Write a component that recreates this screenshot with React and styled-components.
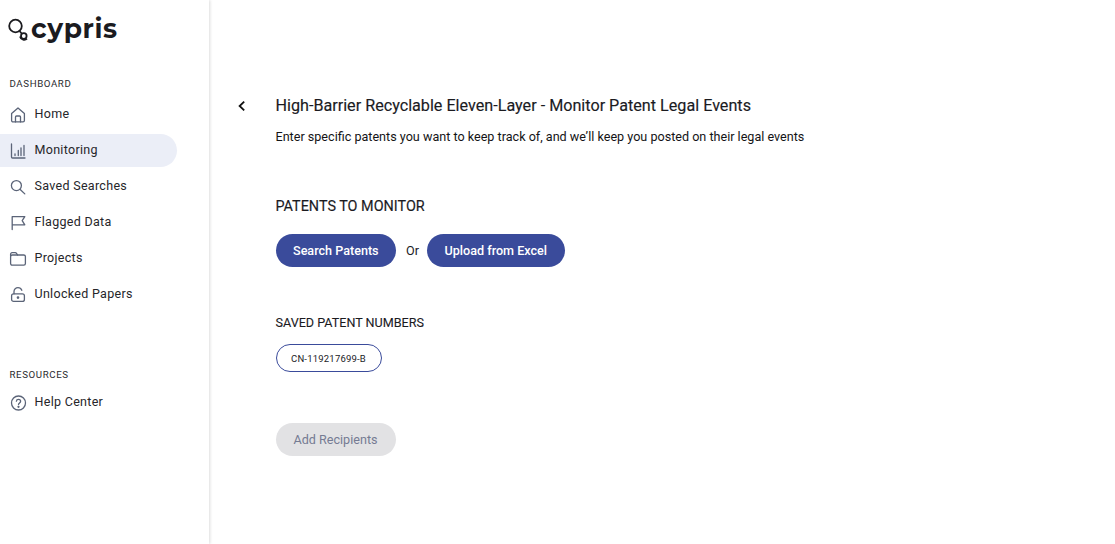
import React from 'react';
import styled, { createGlobalStyle } from 'styled-components';

const GlobalStyle = createGlobalStyle`
html, body {
  margin: 0;
  padding: 0;
  height: 100%;
  background: #fff;
  font-family: Roboto, "Liberation Sans", sans-serif;
  -webkit-font-smoothing: antialiased;
}
#root {
  height: 100%;
}
`

const navIcons = {
  home: (
    <>
      <path d="M2.6 7.6 9 1.9l6.4 5.7v6.9c0 .9-.6 1.4-1.4 1.4H4c-.8 0-1.4-.5-1.4-1.4V7.6z" />
      <path d="M6.5 15.9V11c0-.6.4-1 1-1h3c.6 0 1 .4 1 1v4.9" />
    </>
  ),
  chart: (
    <>
      <path d="M2.5 2v13c0 .6.4 1 1 1H16" />
      <path d="M6 13.5v-1.7M9.3 13.5V8.5M12 13.5V5.8M15 13.5v-10" />
    </>
  ),
  search: (
    <>
      <circle cx="7.4" cy="7.6" r="5" />
      <path d="m11.2 11.5 4.6 4.4" />
    </>
  ),
  flag: (
    <path d="M3.2 15.5V2.6h12.6l-2.6 4 2.6 4.2H3.2" />
  ),
  folder: (
    <>
      <path d="M1.6 6V4.2c0-.9.6-1.5 1.5-1.5h3.2c.5 0 .9.2 1.2.6L8.6 5" />
      <rect x="1.6" y="5" width="14.8" height="10.2" rx="1.6" />
    </>
  ),
  lock: (
    <>
      <rect x="2.6" y="7.8" width="12.8" height="7.6" rx="2" />
      <path d="M5 7.8V5.5c0-2.2 1.8-3.8 4-3.8 1.8 0 3.2 1 3.8 2.6" />
      <circle cx="9" cy="11.6" r=".7" fill="#5b6478" />
    </>
  ),
  help: (
    <>
      <circle cx="9.5" cy="9" r="7" />
      <path d="M7.4 7.2c.1-1.2 1-1.9 2.1-1.9 1.2 0 2.1.8 2.1 1.9 0 1.7-2.1 1.7-2.1 3.4" />
      <circle cx="9.5" cy="12.8" r=".5" fill="#5b6478" />
    </>
  ),
}

const NavItem = ({ icon, label, active }) => (
  <NavRow $active={active}>
    <NavIcon viewBox="0 0 18 18">{navIcons[icon]}</NavIcon>
    <NavLabel>{label}</NavLabel>
  </NavRow>
)

function App() {
  return (
    <Page>
      <GlobalStyle />
      <Sidebar>
        <Logo>
          <svg width="24" height="26" viewBox="0 0 24 26" fill="none" stroke="#1b1b1f" strokeWidth="1.8">
            <circle cx="7.5" cy="10" r="6.3" />
            <path d="m11.5 15 2.6 3" />
            <circle cx="15.8" cy="20" r="2.8" />
            <path d="M12 20.5c1 3.6 5 4.2 7 2.2" />
          </svg>
          <LogoText>cypris</LogoText>
        </Logo>
        <SectionTitle>DASHBOARD</SectionTitle>
        <NavItem icon="home" label="Home" />
        <NavItem icon="chart" label="Monitoring" active />
        <NavItem icon="search" label="Saved Searches" />
        <NavItem icon="flag" label="Flagged Data" />
        <NavItem icon="folder" label="Projects" />
        <NavItem icon="lock" label="Unlocked Papers" />
        <ResourcesTitle>RESOURCES</ResourcesTitle>
        <NavItem icon="help" label="Help Center" />
      </Sidebar>
      <Main>
        <Header>
          <BackIcon viewBox="0 0 12 12" fill="none" stroke="#111" strokeWidth="1.8">
            <path d="M8.2 1.6 3.6 6l4.6 4.4" />
          </BackIcon>
          <Title>High-Barrier Recyclable Eleven-Layer - Monitor Patent Legal Events</Title>
        </Header>
        <Subtitle>Enter specific patents you want to keep track of, and we’ll keep you posted on their legal events</Subtitle>
        <Heading>PATENTS TO MONITOR</Heading>
        <ButtonRow>
          <PillButton>Search Patents</PillButton>
          <OrText>Or</OrText>
          <PillButton>Upload from Excel</PillButton>
        </ButtonRow>
        <SavedHeading>SAVED PATENT NUMBERS</SavedHeading>
        <Chip>CN-119217699-B</Chip>
        <DisabledButton disabled>Add Recipients</DisabledButton>
      </Main>
    </Page>
  )
}

export default App;

const Page = styled.div`
display: flex;
height: 544px;
overflow: hidden;
`
const Sidebar = styled.aside`
width: 209px;
flex-shrink: 0;
box-sizing: border-box;
padding-top: 11px;
box-shadow: 1px 0 3px rgba(0, 0, 0, 0.14);
`
const Logo = styled.div`
display: flex;
align-items: flex-start;
height: 50px;
padding-left: 8px;
svg {
  margin-top: 5px;
  margin-right: -1px;
}
`
const LogoText = styled.span`
font-family: Montserrat, "Open Sans", sans-serif;
font-weight: 700;
font-size: 26.5px;
line-height: 36px;
letter-spacing: 0.6px;
color: #1b1b1f;
`
const SectionTitle = styled.div`
font-size: 9.7px;
line-height: 14px;
letter-spacing: 0.6px;
color: #2a2a2e;
padding-left: 9.5px;
margin: 16px 0 7px;
`
const ResourcesTitle = styled(SectionTitle)`
margin: 57px 0 4px;
`
const NavRow = styled.div`
display: flex;
align-items: center;
width: 177px;
height: 33px;
margin-bottom: 3px;
box-sizing: border-box;
padding-left: 9px;
border-radius: 0 17px 17px 0;
background: ${props => props.$active ? '#ebeef7' : 'transparent'};
`
const NavIcon = styled.svg`
width: 18px;
height: 18px;
flex-shrink: 0;
fill: none;
stroke: #5b6478;
stroke-width: 1.3;
stroke-linecap: round;
stroke-linejoin: round;
`
const NavLabel = styled.span`
margin-left: 7.5px;
padding-bottom: 2px;
font-size: 12.5px;
letter-spacing: 0.3px;
color: #26262a;
`
const Main = styled.main`
flex: 1;
min-width: 0;
padding: 95px 0 0 66.5px;
display: flex;
flex-direction: column;
align-items: flex-start;
`
const Header = styled.div`
display: flex;
align-items: center;
height: 22px;
`
const BackIcon = styled.svg`
width: 12px;
height: 12px;
margin-left: -40px;
margin-right: 28px;
`
const Title = styled.h1`
margin: 0;
font-size: 16.17px;
font-weight: 400;
line-height: 22px;
color: #1b1b1f;
-webkit-text-stroke: 0.15px #1b1b1f;
`
const Subtitle = styled.p`
margin: 12px 0 0;
font-size: 12.6px;
line-height: 16px;
color: #141416;
`
const Heading = styled.h2`
margin: 53px 0 0;
font-size: 14.4px;
font-weight: 400;
line-height: 18px;
color: #1b1b1f;
-webkit-text-stroke: 0.15px #1b1b1f;
`
const ButtonRow = styled.div`
display: flex;
align-items: center;
margin-top: 18px;
`
const PillButton = styled.button`
height: 33px;
padding: 0 17.5px;
border: 0;
border-radius: 17px;
background: #3a4b9b;
color: #fff;
font-family: inherit;
font-size: 12.6px;
font-weight: 500;
cursor: pointer;
`
const OrText = styled.span`
margin: 0 8px 0 10px;
font-size: 12.6px;
color: #1b1b1f;
`
const SavedHeading = styled.h3`
margin: 48px 0 0;
font-size: 12.6px;
font-weight: 400;
line-height: 16px;
color: #1b1b1f;
-webkit-text-stroke: 0.1px #1b1b1f;
`
const Chip = styled.div`
display: flex;
align-items: center;
justify-content: center;
box-sizing: border-box;
width: 106px;
height: 28px;
margin-top: 13px;
border: 1px solid #3a4b9b;
border-radius: 14px;
font-size: 9.5px;
letter-spacing: 0.2px;
color: #1b1b1f;
`
const DisabledButton = styled.button`
width: 120px;
height: 33px;
margin-top: 51px;
border: 0;
border-radius: 17px;
background: #e2e2e4;
color: #757b93;
font-family: inherit;
font-size: 12.6px;
font-weight: 400;
`
